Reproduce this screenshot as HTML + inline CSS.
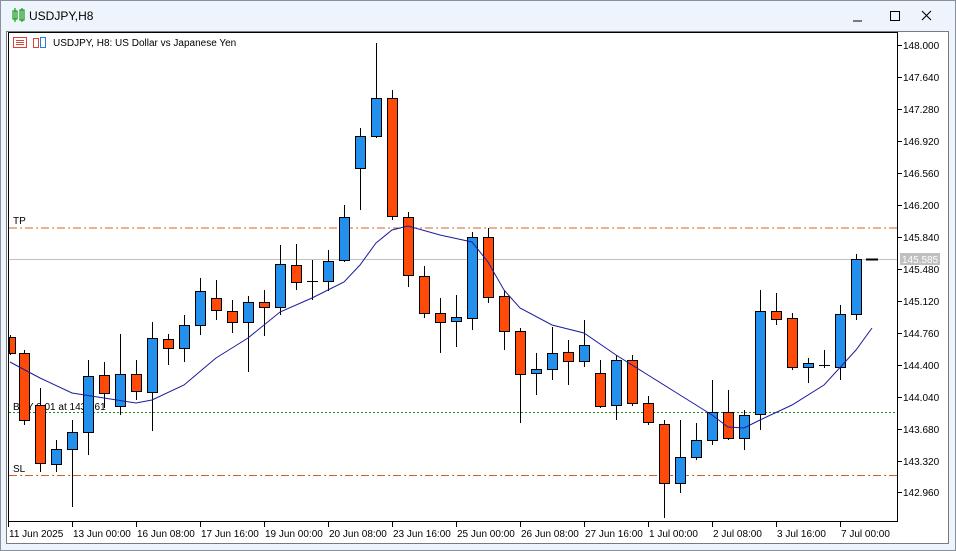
<!DOCTYPE html>
<html><head><meta charset="utf-8"><style>
html,body{margin:0;padding:0;width:956px;height:551px;overflow:hidden;background:#fff;font-family:"Liberation Sans",sans-serif}
</style></head><body>
<svg id="s" width="956" height="551" xmlns="http://www.w3.org/2000/svg" style="position:absolute;left:0;top:0;font-family:'Liberation Sans',sans-serif">
<rect x="0" y="0" width="956" height="551" fill="#eef4fb"/>
<rect x="0.5" y="0.5" width="955" height="550" fill="none" stroke="#8a9099"/>
<rect x="6" y="31" width="943" height="513" fill="#fff"/>
<rect x="6.5" y="31.5" width="942" height="512" fill="none" stroke="#7a7a7a"/>
<!-- title -->
<g fill="none" stroke="#1a9c1a" stroke-width="1.2">
<rect x="13" y="11" width="4" height="8"/><line x1="15" y1="8" x2="15" y2="22"/>
<rect x="20" y="10" width="4" height="10"/><line x1="22" y1="8" x2="22" y2="22"/>
</g>
<text x="29" y="20" font-size="12" fill="#000">USDJPY,H8</text>
<line x1="853" y1="21" x2="862" y2="21" stroke="#000"/>
<rect x="890.5" y="11.5" width="9" height="9" fill="none" stroke="#000"/>
<path d="M922 11 L931 20 M931 11 L922 20" stroke="#000" stroke-width="1.1"/>
<!-- plot frame -->
<rect x="8.5" y="32.5" width="889" height="489" fill="#fff" stroke="#000"/>
<!-- header icons -->
<rect x="13.5" y="37.5" width="13" height="10" fill="#fff" stroke="#d9443a"/>
<path d="M16 40.5h8M16 42.5h8M16 44.5h8" stroke="#d9443a"/>
<rect x="33.5" y="38.5" width="5" height="9" fill="#fff" stroke="#d9443a"/>
<rect x="40.5" y="37.5" width="5" height="10" fill="#fff" stroke="#2a7fd4"/>
<text x="53" y="46" font-size="10" fill="#000">USDJPY, H8:  US Dollar vs Japanese Yen</text>
<!-- levels -->
<line x1="9" y1="228" x2="897" y2="228" stroke="#c8642a" stroke-dasharray="8,3,2,3"/>
<line x1="9" y1="259.5" x2="897" y2="259.5" stroke="#c0c0c0"/>
<line x1="9" y1="412.5" x2="897" y2="412.5" stroke="#1a8a1a" stroke-dasharray="2,2"/>
<line x1="9" y1="475.5" x2="897" y2="475.5" stroke="#c8642a" stroke-dasharray="8,3,2,3"/>
<text x="13" y="224" font-size="10" fill="#000">TP</text>
<text x="13" y="410" font-size="10" fill="#000">BUY 0.01 at 143.861</text>
<text x="13" y="472" font-size="10" fill="#000">SL</text>
<g id="c"></g>
<polyline fill="none" stroke="#1c1c9c" stroke-width="1" points="10,362 40,378 72,393 104,398 136,403 152,400 184,385 216,358 232,348 248,338 280,312 312,298 344,282 360,265 376,243 392,230 408,226 440,235 472,242 488,262 504,290 520,308 552,325 584,333 616,355 648,375 680,395 712,415 728,427 744,428 760,420 792,405 824,385 856,350 872,328"/>
<line x1="866" y1="259.5" x2="878" y2="259.5" stroke="#000" stroke-width="2"/>
<!-- price axis -->
<g font-size="10" fill="#000" id="pa">
<text x="903" y="49">148.000</text><text x="903" y="81">147.640</text><text x="903" y="113">147.280</text><text x="903" y="145">146.920</text><text x="903" y="177">146.560</text><text x="903" y="209">146.200</text><text x="903" y="241">145.840</text><text x="903" y="305">145.120</text><text x="903" y="337">144.760</text><text x="903" y="369">144.400</text><text x="903" y="401">144.040</text><text x="903" y="433">143.680</text><text x="903" y="465">143.320</text><text x="903" y="496">142.960</text>
</g>
<rect x="900" y="253" width="40" height="12" fill="#c0c0c0"/>
<text x="903" y="273" font-size="10" fill="#000">145.480</text>
<text x="902" y="263" font-size="10" fill="#fff">145.585</text>
<!-- time axis -->
<g font-size="10" fill="#000">
<text x="9" y="537">11 Jun 2025</text><text x="73" y="537">13 Jun 00:00</text><text x="137" y="537">16 Jun 08:00</text><text x="201" y="537">17 Jun 16:00</text><text x="265" y="537">19 Jun 00:00</text><text x="329" y="537">20 Jun 08:00</text><text x="393" y="537">23 Jun 16:00</text><text x="457" y="537">25 Jun 00:00</text><text x="521" y="537">26 Jun 08:00</text><text x="585" y="537">27 Jun 16:00</text><text x="649" y="537">1 Jul 00:00</text><text x="713" y="537">2 Jul 08:00</text><text x="777" y="537">3 Jul 16:00</text><text x="841" y="537">7 Jul 00:00</text>
</g>
<g id="t"></g>
</svg>
<script>
var d=[[10,0,337,353,335,355],[24,0,353,420,350,425],[40,0,405,463,388,472],[56,1,449,464,440,472],[72,1,432,449,420,507],[88,1,376,432,360,455],[104,0,375,393,362,408],[120,1,374,406,334,415],[136,0,374,391,360,400],[152,1,338,392,322,431],[168,0,339,348,334,365],[184,1,325,348,315,362],[200,1,291,325,278,335],[216,0,298,310,280,320],[232,0,311,322,300,333],[248,1,302,322,296,372],[264,0,302,307,290,336],[280,1,264,307,245,315],[296,0,265,282,244,290],[312,2,281,282,260,300],[328,1,261,281,250,291],[344,1,217,260,205,262],[360,1,136,168,128,210],[376,1,98,136,43,138],[392,0,98,216,90,220],[408,0,217,275,212,287],[424,0,276,313,266,318],[440,0,313,322,298,353],[456,1,317,321,295,347],[472,1,237,318,232,330],[488,0,237,297,228,303],[504,0,296,331,290,350],[520,0,331,374,328,423],[536,1,369,373,353,395],[552,1,353,369,327,380],[568,0,352,361,340,385],[584,1,345,361,320,367],[600,0,373,406,360,408],[616,1,360,405,355,420],[632,0,360,403,355,406],[648,0,403,422,396,425],[664,0,424,483,420,518],[680,1,457,483,420,493],[696,1,440,457,423,460],[712,1,412,440,380,445],[728,0,412,438,390,440],[744,1,415,438,410,450],[760,1,311,414,290,430],[776,0,311,319,293,325],[792,0,318,367,313,370],[808,1,363,367,358,383],[824,2,365,366,350,368],[840,1,314,367,305,380],[856,1,259,314,254,320]];
var h='';d.forEach(function(c){var x=c[0];h+='<line x1="'+(x+.5)+'" y1="'+c[4]+'" x2="'+(x+.5)+'" y2="'+c[5]+'" stroke="#000"/>';
if(c[1]==2){h+='<line x1="'+(x-5)+'" y1="'+(c[2]+.5)+'" x2="'+(x+6)+'" y2="'+(c[2]+.5)+'" stroke="#000"/>';}
else{var x0=Math.max(x-5,9);h+='<rect x="'+(x0+.5)+'" y="'+(c[2]+.5)+'" width="'+(x+5-x0)+'" height="'+Math.max(c[3]-c[2],1)+'" fill="'+(c[1]?'#2490ee':'#ff4a0a')+'" stroke="#000"/>';}});
document.getElementById('c').innerHTML=h;
var t='';[45,77,109,141,173,205,237,269,301,333,365,397,429,461,492].forEach(function(y){t+='<line x1="898" y1="'+(y+.5)+'" x2="902" y2="'+(y+.5)+'" stroke="#000"/>';});
[8,72,136,200,264,328,392,456,520,584,648,712,776,840].forEach(function(x){t+='<line x1="'+(x+.5)+'" y1="522" x2="'+(x+.5)+'" y2="527" stroke="#000"/>';});
document.getElementById('t').innerHTML=t;
</script>
</body></html>
